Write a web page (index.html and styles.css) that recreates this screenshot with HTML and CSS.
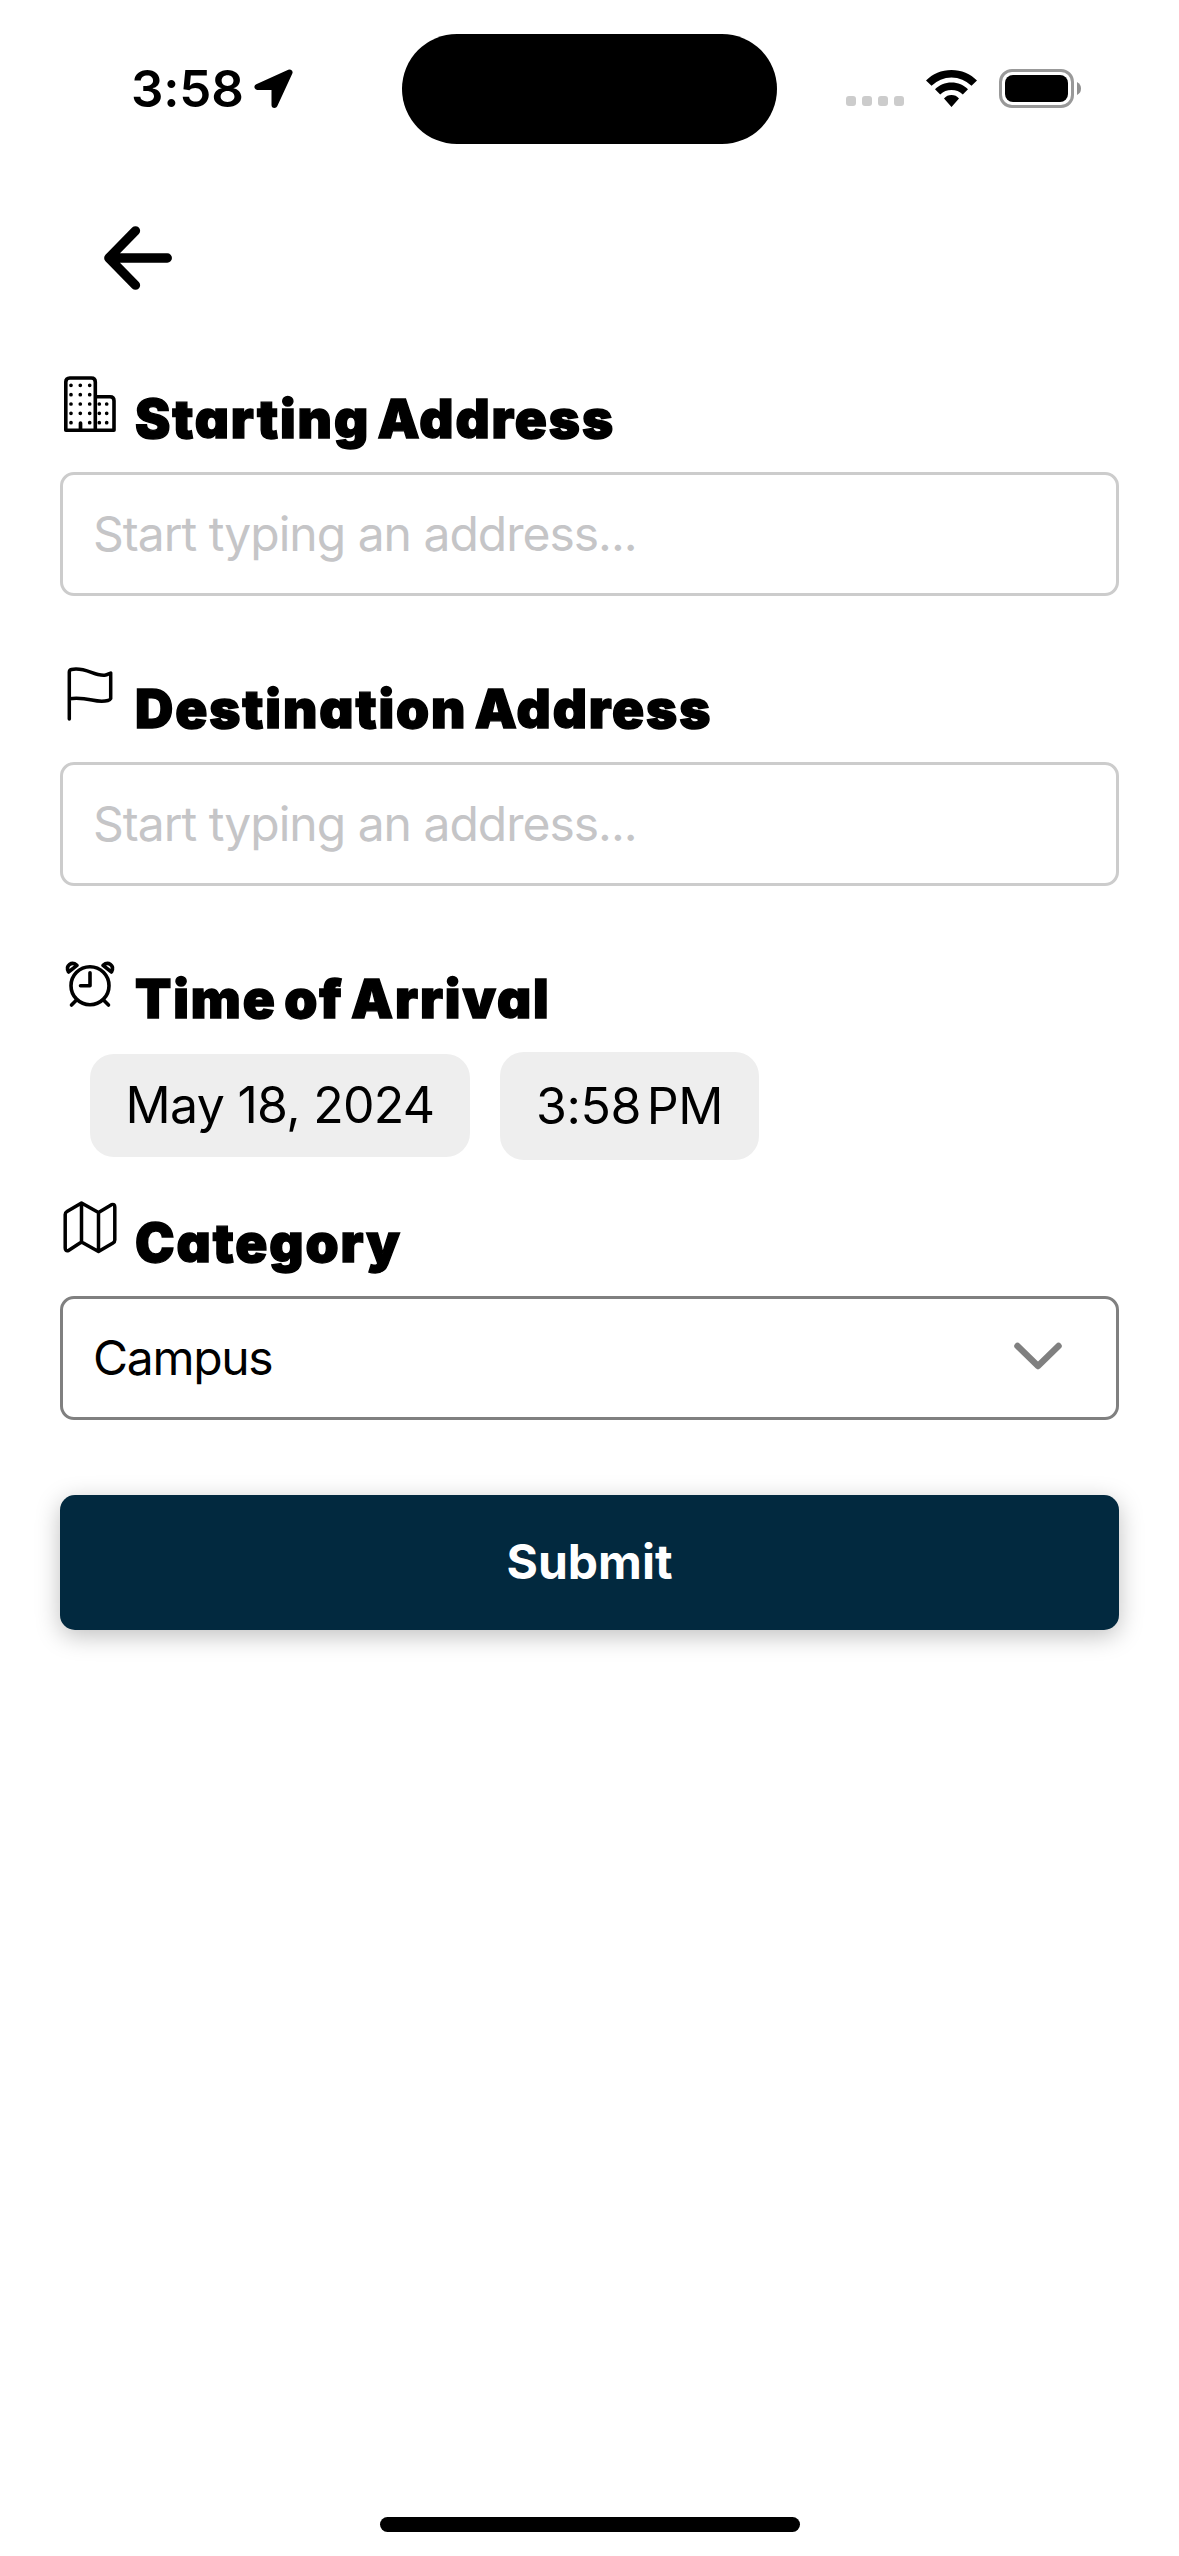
FILE: index.html
```html
<!DOCTYPE html>
<html lang="en">
<head>
<meta charset="utf-8">
<title>New Ride</title>
<link rel="stylesheet" href="styles.css">
</head>
<body>
<header class="status">
  <div class="status-left">
    <span class="clock">3:58</span>
    <svg class="location" width="40" height="40" viewBox="0 0 40 40"><path d="M35.500 3.500L3.500 18H20.500V36Z" fill="#000" stroke="#000" stroke-width="6" stroke-linejoin="round"/></svg>
  </div>
  <div class="island"></div>
  <div class="status-right">
    <div class="dots"><i></i><i></i><i></i><i></i></div>
    <svg class="wifi" width="51" height="38" viewBox="0 0 51 38"><path d="M25.500 0C35.500 0 44.500 4 51 10.500L45.500 15.800A28.500 28.500 0 0 0 5.500 15.800L0 10.500C6.500 4 15.500 0 25.500 0ZM25.500 12.500C32 12.500 37.800 15 42 19.300L36.800 24.600A16.500 16.500 0 0 0 14.200 24.600L9 19.300C13.200 15 19 12.500 25.500 12.500ZM25.500 25C28.500 25 31 26.200 33 28.400L25.500 37L18 28.400C20 26.200 22.500 25 25.500 25Z"/></svg>
    <div class="battery"><div class="charge"></div></div>
    <svg class="nub" width="5" height="13" viewBox="0 0 5 13"><path d="M0 0Q4 2 4 6.500T0 13Z" fill="#909090"/></svg>
  </div>
</header>
<main class="form">
  <button class="back" aria-label="Back"><svg width="68" height="64" viewBox="0 0 68 64"><path d="M31.500 4.800L4.800 32L31.500 59.200M4.800 32H63.300" fill="none" stroke="#000" stroke-width="9.300" stroke-linecap="round" stroke-linejoin="round"/></svg></button>

  <section class="field">
    <h2 class="label"><svg class="icon" width="60" height="60" viewBox="0 0 60 60"><path d="M5.800 57.300V9Q5.800 5 9.800 5H31.300Q35.300 5 35.300 9V57.300ZM35.300 23.700H50Q54 23.700 54 27.700V57.300H35.300" fill="none" stroke="#000" stroke-width="3.600" stroke-linejoin="round"/><path d="M11 12.300h0M20.300 12.300h0M29.700 12.300h0M11 21.700h0M20.300 21.700h0M29.700 21.700h0M11 31h0M20.300 31h0M29.700 31h0M39.300 31h0M46.700 31h0M11 40.300h0M20.300 40.300h0M29.700 40.300h0M39.300 40.300h0M46.700 40.300h0M11 49.700h0M29.700 49.700h0M39.300 49.700h0M46.700 49.700h0M20.500 50V56" stroke="#000" stroke-width="3.700" stroke-linecap="round" fill="none"/></svg><span>Starting Address</span></h2>
    <input class="box" type="text" placeholder="Start typing an address...">
  </section>

  <section class="field">
    <h2 class="label"><svg class="icon" width="60" height="60" viewBox="0 0 60 60"><path d="M9.300 56V9Q9.300 7 11.500 6.500C22 4 31 10 38 11.500S46 12 50.700 10V35.500Q50 37 48 37.500C35 41 30 33.200 9.300 35.700" fill="none" stroke="#000" stroke-width="3.500" stroke-linecap="round" stroke-linejoin="round"/></svg><span>Destination Address</span></h2>
    <input class="box" type="text" placeholder="Start typing an address...">
  </section>

  <section class="field time">
    <h2 class="label"><svg class="icon" width="60" height="60" viewBox="0 0 60 60"><g fill="none" stroke="#000" stroke-width="3.600" stroke-linecap="round" stroke-linejoin="round"><circle cx="30" cy="32.700" r="19"/><path d="M30 19.700V32.700H20.500M16 47.500L11.500 52M44 47.500L48.500 52M8.500 19Q6 14 9.500 11.500T17 12.300ZM51.500 19Q54 14 50.500 11.500T43 12.300Z"/></g></svg><span>Time of Arrival</span></h2>
    <div class="pickers"><button class="pill date"><span>May 18, 2024</span></button><button class="pill hour"><span>3:58 PM</span></button></div>
  </section>

  <section class="field category">
    <h2 class="label"><svg class="icon" width="60" height="60" viewBox="0 0 60 60"><path d="M5.200 17.500Q5.200 15.500 7 14.500L21.500 6L38.500 15.500L51.500 7.700Q54.800 6.500 54.800 10V43Q54.800 45 53 46L38.500 54.500L21.500 45L8.500 53.500Q5.200 54.500 5.200 51ZM21.500 6V45M38.500 15.500V54.500" fill="none" stroke="#000" stroke-width="3.500" stroke-linejoin="round"/></svg><span>Category</span></h2>
    <button class="box select"><span>Campus</span><svg class="chevron" width="48" height="28" viewBox="0 0 48 28"><path d="M3.500 4L24 24L44.500 4" fill="none" stroke="#808080" stroke-width="6.500" stroke-linecap="round" stroke-linejoin="round"/></svg></button>
  </section>

  <button class="submit"><span>Submit</span></button>
</main>
<footer class="home"></footer>
</body>
</html>
```
FILE: styles.css
```css
* { box-sizing: border-box; }
body { margin: 0; width: 1179px; height: 2556px; background: #fff; color: #000; font-family: Inter, "Liberation Sans", sans-serif; display: flex; flex-direction: column; overflow: hidden; }
button { font: inherit; color: inherit; border: 0; background: none; padding: 0; margin: 0; }
svg { display: block; flex: none; }
.status { height: 177px; padding-top: 33px; display: grid; grid-template-columns: 402px 375px 402px; align-items: start; }
.status-left { height: 111px; display: flex; align-items: center; padding-left: 131px; }
.clock { width: 123px; font-size: 51px; font-weight: 580; line-height: 60px; letter-spacing: -.2px; white-space: nowrap; }
.island { height: 110px; margin-top: 1px; border-radius: 55px; background: #000; }
.status-right { height: 111px; display: flex; align-items: center; padding-left: 69px; }
.dots { display: flex; gap: 6px; margin-top: 25px; }
.dots i { width: 10px; height: 10px; border-radius: 3px; background: #ccc; }
.wifi { margin-left: 22px; }
.battery { margin-left: 22px; width: 75px; height: 39px; border: 3px solid #999; border-radius: 13px; padding: 3px; }
.charge { height: 27px; border-radius: 8px; background: #000; }
.nub { margin-left: 3px; }
.form { flex: 1; padding: 49px 60px 0; display: flex; flex-direction: column; }
.back { align-self: flex-start; width: 68px; height: 64px; margin-left: 44px; }
.field { margin-top: 76px; height: 214px; }
.field:nth-of-type(1) { margin-top: 83px; }
.label { margin: 0; height: 99px; display: flex; font-size: 53px; font-weight: 900; line-height: 64px; font-feature-settings: "cv11"; letter-spacing: 1.9px; word-spacing: -5px; -webkit-text-stroke: 1.4px #000; white-space: nowrap; }
.icon { margin-right: 15px; }
.label span { margin-top: 14px; }
.box { display: flex; align-items: center; width: 1059px; height: 124px; border: 3px solid #ccc; border-radius: 14px; padding: 0 31px 2px 30px; font: 400 48px/60px Inter, "Liberation Sans", sans-serif; background: #fff; outline: 0; letter-spacing: -1px; }
.box::placeholder { color: #c5c5c7; opacity: 1; }
.pickers { display: flex; align-items: center; gap: 30px; padding-left: 30px; height: 108px; }
.pill { background: #eee; border-radius: 24px; font-size: 50px; line-height: 60px; white-space: nowrap; }
.date { width: 380px; height: 103px; margin-bottom: 2px; letter-spacing: -.7px; }
.hour { width: 259px; height: 108px; letter-spacing: -.4px; word-spacing: -8px; }
.field.category { margin-top: 30px; height: 223px; }
.select { border-color: #808080; justify-content: space-between; padding: 0 54px 0 30px; letter-spacing: -1.3px; }
.chevron { margin-bottom: 4px; }
.submit { margin-top: 75px; height: 135px; padding-bottom: 2px; flex: none; border-radius: 15px; background: #02293f; color: #fff; font-size: 48px; font-weight: 650; box-shadow: 0 6px 24px rgba(0,0,0,.25); }
.home { width: 420px; height: 15px; border-radius: 8px; background: #000; margin: 0 auto 24px; }
```
